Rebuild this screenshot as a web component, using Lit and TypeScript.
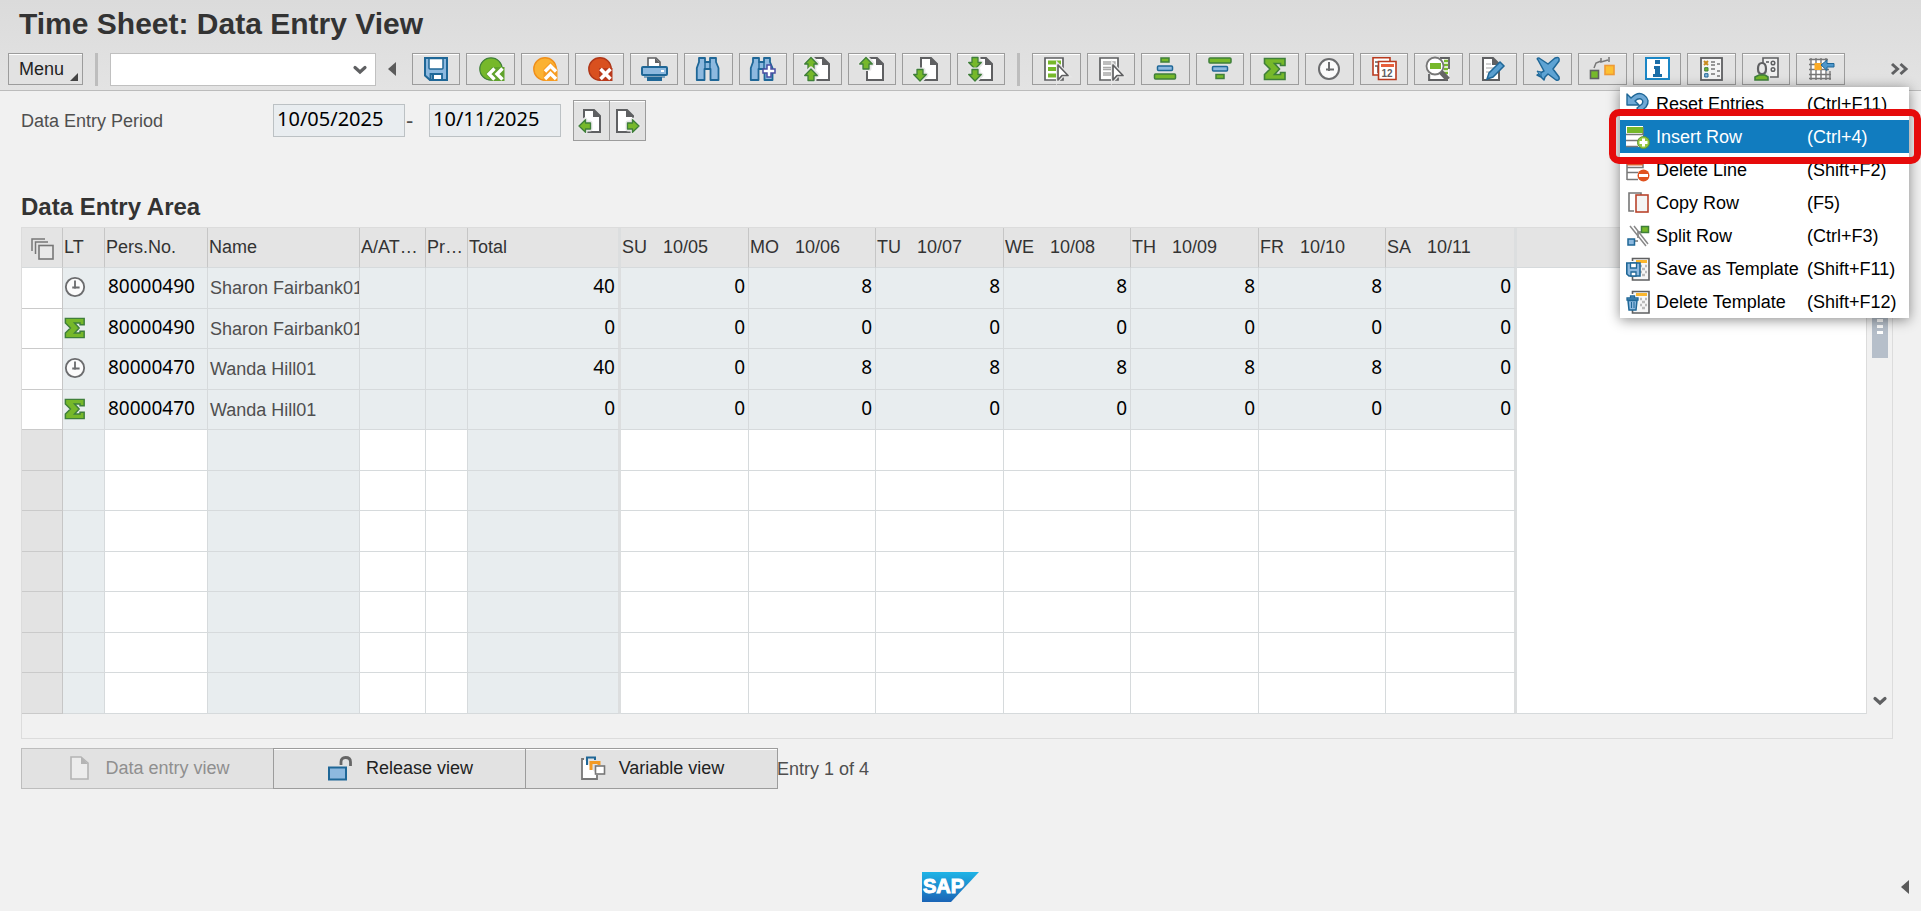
import { LitElement, html, css, svg, nothing } from "lit";
import { customElement, property, state } from "lit/decorators.js";
import { classMap } from "lit/directives/class-map.js";

const G = "#76b82a";
const GD = "#3f7f3a";
const B = "#1f6797";
const BL = "#8db9df";
const K = "#5f6062";

const page = (x: number, y: number) => svg`
  <g transform="translate(${x} ${y})">
    <path d="M1 1H11L17 7V23H1Z" fill="#fff" stroke=${K} stroke-width="2"/>
    <path d="M10 0L18 8H10Z" fill=${K}/>
  </g>`;
const arrow = (x: number, y: number, rot: number) => svg`
  <g transform="translate(${x} ${y}) rotate(${rot})">
    <path d="M0-6L6 0H3V5H-3V0H-6Z" fill="none" stroke="#e6e6e6" stroke-width="5" stroke-linejoin="round"/>
    <path d="M0-6L6.300 0.500H3V5.500H-3V0.500H-6.300Z" fill=${G} stroke=${GD} stroke-width="1.300" stroke-linejoin="round"/>
  </g>`;
const sigma = svg`<path d="M1.500 1.500H22V8.500H17.500V6.500H11.500L16.500 12L11.500 17.500H17.500V15.500H22V22.500H1.500V17.500L7 12L1.500 6.500Z" fill=${G} stroke=${GD} stroke-width="1.600"/>`;
const clock = svg`<circle cx="12" cy="12" r="10" fill="#fbfbfb" stroke="#6b6c6e" stroke-width="2"/>
  <path d="M12 5V14M9 12.500H17" fill="none" stroke="#6b6c6e" stroke-width="2"/>`;
const binoculars = svg`<path d="M3 1H9V5H14V1H20V5L22.500 11V23H14.500V12H8.500V23H0.800V11L3 5Z" fill=${BL} stroke=${B} stroke-width="1.800" stroke-linejoin="round"/>
  <path d="M9 5V12M14 5V12" stroke=${B} stroke-width="1.400"/>`;
const cursor = svg`<path d="M14 8V23L18 18.500H24Z" fill="#fff" stroke="#e6e6e6" stroke-width="4"/>
  <path d="M14 8V23L18 18.500H24Z" fill="#fff" stroke=${K} stroke-width="1.700" stroke-linejoin="round"/>`;
const template = svg`<path d="M6.500 4V1.500H23V23H6.500V20" fill="#f7f7f7" stroke=${K} stroke-width="1.600"/>
  <path d="M10 4.500H21" stroke="#fbb62d" stroke-width="3"/>
  <path d="M14 9H16M19 9H21M16 12H19M14 15H16M19 15H21M16 18H19" stroke="#bbb" stroke-width="2.400"/>`;

const ICONS: Record<string, unknown> = {
  save: svg`<path d="M1 1H23V23H6L1 18.500Z" fill=${BL} stroke=${B} stroke-width="2"/>
    <path d="M5 1.500H19V11Q19 12 18 12H6Q5 12 5 11Z" fill="#fff" stroke=${B} stroke-width="1.500"/>
    <path d="M6.500 23V17H18V23Z" fill="#fff" stroke=${B} stroke-width="1.800"/><path d="M7.500 18H10V22H7.500Z" fill=${B}/>`,
  back: svg`<circle cx="12" cy="12" r="11.200" fill=${G} stroke=${GD} stroke-width="1.200"/>
    <path d="M6.500 17L13 10H25.500V24H13Z" fill="#5fa22c"/>
    <path d="M15.500 11.500L10 17L15.500 22.500M23.500 11.500L18 17L23.500 22.500" fill="none" stroke="#fff" stroke-width="3.400"/>`,
  exit: svg`<circle cx="12" cy="12" r="11.200" fill="#fbb233" stroke="#ef8f1b" stroke-width="1.400"/>
    <path d="M10.500 12L17.500 5L24.500 12V24H10.500Z" fill="#f79c22"/>
    <path d="M12 14.500L17.500 9L23 14.500M12 22L17.500 16.500L23 22" fill="none" stroke="#fff" stroke-width="3.400"/>`,
  cancel: svg`<circle cx="12" cy="12" r="11.200" fill="#d9501f" stroke="#b0381a" stroke-width="1.400"/>
    <path d="M11 11H24.500V24H11Z" fill="#b93a1c"/>
    <path d="M12.500 12L22.500 22M22.500 12L12.500 22" stroke="#fff" stroke-width="3.600"/>`,
  print: svg`<path d="M6 9V1H14L18 5V9" fill="#fff" stroke=${K} stroke-width="1.600"/><path d="M13 1V6H18Z" fill=${K}/>
    <rect x="0" y="10" width="25" height="8" rx="1" fill=${BL} stroke=${B} stroke-width="2"/>
    <path d="M19 13H22V15H19Z" fill="#fff"/><path d="M2 19.500H23V20.500H20V24H5V20.500H2Z" fill=${B}/>`,
  find: binoculars,
  findNext: svg`<g transform="translate(-1 0)">${binoculars}</g>
    <path d="M16 11V8H20V12H24V16H20V20H16V16H12V12H16Z" fill="#fff" stroke="#4a4ea3" stroke-width="1.500"/>`,
  first: svg`${page(7, 0)}${arrow(6, 6.500, 0)}${arrow(6, 18, 0)}`,
  prev: svg`${page(6, 0)}${arrow(6, 6.500, 0)}`,
  next: svg`${page(6, 0)}${arrow(6, 18, 180)}`,
  last: svg`${page(6, 0)}${arrow(6, 6, 180)}${arrow(6, 18, 180)}`,
  selectAll: svg`<path d="M1 1H19V23H1Z" fill="#fff" stroke=${K} stroke-width="1.700"/>
    <path d="M4 5.500H17M4 12H14M4 18.500H13" stroke=${G} stroke-width="4"/>${cursor}`,
  deselect: svg`<path d="M1 1H19V23H1Z" fill="#fff" stroke=${K} stroke-width="1.700"/>
    <path d="M4 5H16V7H4M4 10.500H13V12.500H4M4 16H12V18H4" fill="none" stroke="#a9a9a9" stroke-width="1.300"/>${cursor}`,
  sortAsc: svg`<rect x="8" y="1" width="8" height="4" fill=${G} stroke=${GD} stroke-width="1.500"/>
    <rect x="4.500" y="9" width="15" height="4.500" rx="1" fill=${BL} stroke=${B} stroke-width="1.500"/>
    <rect x="1.500" y="17" width="21" height="5" rx="1" fill=${G} stroke=${GD} stroke-width="1.500"/>`,
  sortDesc: svg`<rect x="1" y="1" width="22" height="5" rx="1" fill=${G} stroke=${GD} stroke-width="1.500"/>
    <rect x="4.500" y="9.500" width="15" height="4.500" rx="1" fill=${BL} stroke=${B} stroke-width="1.500"/>
    <rect x="8" y="17.500" width="8" height="4" fill=${G} stroke=${GD} stroke-width="1.500"/>`,
  sigma,
  clock,
  calendar: svg`<path d="M1 0.800H18V18H1Z" fill="#fff" stroke="#b93a1e" stroke-width="1.600"/><path d="M3 5H8M3 9H6V16" stroke=${K} stroke-width="1.600" fill="none"/>
    <path d="M6.500 4.500H24V22.500H6.500Z" fill="#fff" stroke="#b93a1e" stroke-width="1.600"/><path d="M9 8.500H22" stroke="#e8603c" stroke-width="3"/>
    <text x="9.500" y="20" font-family="Liberation Sans" font-weight="700" font-size="10" fill=${K}>12</text>`,
  analyze: svg`<path d="M5 1H23V23H5Z" fill="#fff"/><path d="M14 1H23V12M3 17V23H22" stroke=${K} stroke-width="1.800" fill="none"/>
    <path d="M18 4H22M18 8H22M18 12H22M18 16H22" stroke=${G} stroke-width="2.400"/>
    <circle cx="9" cy="9" r="8.500" fill="#fff" stroke="#777" stroke-width="1.800"/><path d="M4 6H15V12H4Z" fill=${G}/>
    <path d="M15 15L22 22.500" stroke="#666" stroke-width="5"/>`,
  edit: svg`${page(1, 0)}<path d="M5 7H10M5 11H14M5 15H12" stroke="#c4c4c4" stroke-width="1.600"/>
    <path d="M19 5L23 9L12 20L6 22L8 16Z" fill="#5a9fd0" stroke=${B} stroke-width="1.500"/>`,
  plane: svg`<path d="M2 3Q0 1 3 1L12 7L19 1Q24-1 23 4L17 12L23 20Q24 24 20 23L12 17L9 20L8 23L5 20L1 18L4 16L8 14Z" fill="#5ea3d3" stroke=${B} stroke-width="1.500" stroke-linejoin="round"/>
    <path d="M1 14L5 15V20Z" fill="#5ea3d3" stroke=${B}/>`,
  assign: svg`<path d="M4 11L6 6L11 4M11 1V5L18 3M19 0V5" fill="none" stroke="#777" stroke-width="1.500"/>
    <rect x="0.500" y="13.500" width="8" height="8" fill=${G} stroke=${K} stroke-width="1.600"/>
    <rect x="15" y="8.500" width="9" height="9" fill="#fcc032" stroke="#ef9a35" stroke-width="1.600"/>`,
  info: svg`<rect x="1" y="1" width="23" height="21" fill="#fff" stroke="#1b87c6" stroke-width="2"/>
    <path d="M10 3H15V7H10ZM9 9H15V17H17V20H8V17H10V12H9Z" fill="#1b6ea8"/>`,
  list: svg`<rect x="2" y="1" width="21" height="22" fill="#f4f4f4" stroke=${K} stroke-width="1.800"/>
    <path d="M5 4L9 8M9 4L5 8" stroke="#c98a1c" stroke-width="2"/><path d="M5.700 10.700H9V14H5.700Z" fill=${G} stroke=${GD}/><path d="M5.700 16.700H9V20H5.700Z" fill=${BL} stroke=${B}/>
    <path d="M12 5H16M18 7H21M12 8H16M12 12H16M18 14H21M12 17H16M18 19H21" stroke="#777" stroke-width="1.600"/>`,
  person: svg`<path d="M9 6V1H24V20H16" fill="#f0f0f0" stroke=${K} stroke-width="1.600"/>
    <path d="M12 5H15" stroke=${K} stroke-width="1.600"/>
    <circle cx="19" cy="6" r="1.800" fill="none" stroke=${K} stroke-width="1.500"/><circle cx="19" cy="12.500" r="1.800" fill="none" stroke=${K} stroke-width="1.500"/>
    <path d="M4 12Q4 6 8 6Q12 6 12 12Q12 17 8 17Q4 17 4 12Z" fill="#e9e9e9" stroke=${K} stroke-width="2.200"/>
    <path d="M1 23V20L5 18H11L14 20V23Z" fill=${G} stroke=${GD} stroke-width="1.600"/>`,
  grid: svg`<path d="M2 2H18V22H2Z" fill="#fff"/><path d="M2 1V23M7 1V23M12 1V23M17 1V23M21 14V23M0 2.500H19M0 7.500H14M0 12.500H20M0 17.500H22M0 21.500H22" stroke="#777" stroke-width="1.400"/>
    <rect x="5.500" y="6" width="7" height="7" fill="#fbab26"/><path d="M12 8L18 3V6.500H25V10H18V13.500Z" fill="#4e97cb" stroke=${B} stroke-width="1"/>`,
  pageBack: svg`${page(3, 0)}${arrow(5, 17, -90)}`,
  pageFwd: svg`${page(0, 0)}${arrow(17, 17, 90)}`,
  undo: svg`<path d="M1 2L5 6Q12-1 18 3Q25 8 20 15L13 21L11 16L16 12Q18 9 15 7Q12 6 9 9L13 13H1Z" fill="#6fa9d6" stroke=${B} stroke-width="1.400" stroke-linejoin="round"/>`,
  insert: svg`<path d="M0 1H17V22H0Z" fill="#fff"/><path d="M0 9.500H17V2M0 15.500H12M0 21.500H12" stroke="#777" stroke-width="1.500" fill="none"/><path d="M1 5H17" stroke=${G} stroke-width="6"/>
    <circle cx="17.500" cy="17.500" r="6" fill="#95c840" stroke="#5d9632"/><path d="M17.500 13.500V21.500M13.500 17.500H21.500" stroke="#fff" stroke-width="3"/>`,
  remove: svg`<path d="M1 9.500H17V2M1 14.500H12M1 21.500H12M1 1V22" stroke="#777" stroke-width="1.500" fill="none"/><path d="M1 4.500H17" stroke="#dc5a2c" stroke-width="6"/>
    <circle cx="17.500" cy="17.500" r="6" fill="#e0521f"/><path d="M13 17.500H22" stroke="#fff" stroke-width="3"/>`,
  copy: svg`<path d="M8 20H3V2H15V4" fill="none" stroke="#777" stroke-width="1.600"/><rect x="10" y="4" width="12" height="17" fill="#f4f4f4" stroke="#b9442c" stroke-width="1.600"/>`,
  split: svg`<path d="M12 14V8H16M8 17H12" fill="none" stroke="#777" stroke-width="1.500"/><path d="M4 2L20 22M8 2L22 20" stroke="#888" stroke-width="1.500"/>
    <rect x="15.500" y="2.500" width="7" height="6" fill=${G} stroke=${GD} stroke-width="1.500"/><rect x="2" y="15" width="6.500" height="6" fill=${BL} stroke=${B} stroke-width="1.500"/>`,
  saveTpl: svg`${template}<path d="M0.800 6H14V19H3L0.800 17Z" fill=${BL} stroke=${B} stroke-width="1.600"/>
    <path d="M4.500 6H10.500V11H4.500Z" fill="#fff" stroke=${B} stroke-width="1.300"/><path d="M5 19V15H10V19Z" fill="#fff" stroke=${B} stroke-width="1.300"/>`,
  deleteTpl: svg`${template}<path d="M1 8H12V10H1ZM4.500 6H8.500V8H4.500Z" fill=${BL} stroke=${B} stroke-width="1.300"/>
    <path d="M2 10.500H11L10 20H3Z" fill=${BL} stroke=${B} stroke-width="1.500"/><path d="M5.500 12V18M8 12V18" stroke=${B}/>`,
  doc: svg`<path d="M4 1H14L21 7V23H4Z" fill="#ececec" stroke="#b4b4b4" stroke-width="1.600"/><path d="M14 1V8H21Z" fill="#b4b4b4"/>`,
  unlock: svg`<path d="M13 9V6Q13 1.500 17.500 1.500Q22.500 1.500 22.500 6V10" fill="none" stroke="#666" stroke-width="2.800"/>
    <rect x="1" y="11.500" width="17" height="12" fill=${BL} stroke=${B} stroke-width="2"/>`,
  variable: svg`<path d="M3 3H1V23H16V19" fill="#fff" stroke="#777" stroke-width="1.800"/>
    <path d="M6 9V1.500H14V4" fill="none" stroke=${B} stroke-width="2"/><path d="M10 14V6.500H18V9" fill="none" stroke="#f39a23" stroke-width="3"/>
    <rect x="14.500" y="10" width="9" height="8" fill="#fff" stroke="#777" stroke-width="1.600"/>`,
  stack: svg`<path d="M1 14V2H14M4.500 17V5H17" fill="none" stroke="#777" stroke-width="1.500"/><rect x="8" y="8.500" width="14" height="13.500" fill="#e9e9e9" stroke="#777" stroke-width="1.600"/>`,
  chevron: svg`<path d="M7 9.500L12 14L17 9.500" fill="none" stroke=${K} stroke-width="3.200" stroke-linecap="round"/>`,
  double: svg`<path d="M5 7L10.500 12L5 17M13.500 7L19 12L13.500 17" fill="none" stroke=${K} stroke-width="3"/>`,
};

@customElement("sap-icon")
class SapIcon extends LitElement {
  @property() name = "";
  static styles = css`
    :host { display: block; flex: none; width: 24px; height: 24px; }
    .glyph { display: block; width: 100%; height: 100%; overflow: visible; }
  `;
  render() {
    return html`<svg class="glyph" viewBox="0 0 24 24" aria-hidden="true">${ICONS[this.name]}</svg>`;
  }
}

const STANDARD: [string, string][] = [
  ["save", "Save"], ["back", "Back"], ["exit", "Exit"], ["cancel", "Cancel"], ["print", "Print"], ["find", "Find"],
  ["findNext", "Find next"], ["first", "First page"], ["prev", "Previous page"], ["next", "Next page"], ["last", "Last page"],
];
const APPLICATION: [string, string][] = [
  ["selectAll", "Select all"], ["deselect", "Deselect all"], ["sortAsc", "Sort ascending"], ["sortDesc", "Sort descending"],
  ["sigma", "Sum"], ["clock", "Clock times"], ["calendar", "Target hours"], ["analyze", "Check entries"], ["edit", "Texts"],
  ["plane", "Travel"], ["assign", "Account assignment"], ["info", "Information"], ["list", "Worklist"],
  ["person", "Personnel list"], ["grid", "Layout"],
];
const MENU = [
  { icon: "undo", text: "Reset Entries", key: "(Ctrl+F11)" },
  { icon: "insert", text: "Insert Row", key: "(Ctrl+4)" },
  { icon: "remove", text: "Delete Line", key: "(Shift+F2)" },
  { icon: "copy", text: "Copy Row", key: "(F5)" },
  { icon: "split", text: "Split Row", key: "(Ctrl+F3)" },
  { icon: "saveTpl", text: "Save as Template", key: "(Shift+F11)" },
  { icon: "deleteTpl", text: "Delete Template", key: "(Shift+F12)" },
];
const DAYS = ["SU 10/05", "MO 10/06", "TU 10/07", "WE 10/08", "TH 10/09", "FR 10/10", "SA 10/11"];
const COLUMNS = ["sel", "lt", "no", "name", "att", "pr", "total", "day", "day-b", "day", "day-b", "day", "day-b", "last"];
const ENTRIES = [
  { type: "clock", no: "80000490", name: "Sharon Fairbank01", total: 40, days: [0, 8, 8, 8, 8, 8, 0] },
  { type: "sigma", no: "80000490", name: "Sharon Fairbank01", total: 0, days: [0, 0, 0, 0, 0, 0, 0] },
  { type: "clock", no: "80000470", name: "Wanda Hill01", total: 40, days: [0, 8, 8, 8, 8, 8, 0] },
  { type: "sigma", no: "80000470", name: "Wanda Hill01", total: 0, days: [0, 0, 0, 0, 0, 0, 0] },
];
const EMPTY_ROWS = 7;

@customElement("app-root")
class AppRoot extends LitElement {
  @state() private active = "Insert Row";

  static styles = css`
    * { box-sizing: border-box; }
    :host {
      display: flex; flex-direction: column; min-height: 100vh; background: #f1f1f1; color: #333;
      font: 18px/24px "Liberation Sans", Arial, sans-serif;
    }
    button, input { font: inherit; color: inherit; margin: 0; border-radius: 0; }
    button { padding: 0; border: 1px solid #9c9c9c; background: #e2e2e2; box-shadow: inset 0 1px #fff; display: flex; align-items: center; justify-content: center; }

    .header { position: relative; background: linear-gradient(#dbdbdb, #e3e3e3); border-bottom: 1px solid #bcbcbc; }
    .title { margin: 0; padding: 6px 19px 5px; font-size: 30px; line-height: 36px; font-weight: 700; }
    .toolbar { display: flex; align-items: flex-start; padding: 6px 10px 4px 8px; }
    .menu-button { width: 75px; height: 32px; color: #222; justify-content: flex-start; padding-left: 10px; align-items: center; }
    .corner { align-self: flex-end; margin: 0 0 3px 6px; border-left: 8px solid transparent; border-bottom: 8px solid #444; }
    .separator { width: 3px; height: 33px; margin: 0 12px; background: #bdbdbd; flex: none; }
    .command { display: flex; align-items: center; width: 266px; height: 33px; background: #fff; border: 1px solid #c0c0c0; }
    .command-input { flex: 1; min-width: 0; height: 100%; border: 0; padding: 0 6px; background: none; outline: 0; }
    .bare { border: 0; background: none; box-shadow: none; }
    .drop { margin-right: 3px; }
    .triangle { border: solid transparent; border-width: 7px 8px 7px 0; border-right-color: #5b5b5b; }
    .collapse { height: 32px; margin: 0 16px 0 12px; }
    .tools { display: flex; gap: 6px; min-width: 0; }
    .standard { flex: 0 1 593px; }
    .application { flex: 0 1 813px; }
    .tool { flex: 1; min-width: 0; height: 32px; }
    .more { height: 32px; margin-left: auto; }

    .menu {
      position: absolute; z-index: 2; top: 87px; right: 12px; width: 289px; margin: 0; padding: 0; list-style: none;
      background: #fff; color: #000; box-shadow: 0 2px 12px rgba(0, 0, 0, 0.45);
    }
    .item { position: relative; }
    .entry { width: 100%; height: 33px; padding-left: 6px; text-align: left; display: grid; grid-template-columns: 30px 151px 1fr; justify-items: start; }
    .entry.on { background: #117cbf; color: #fff; }
    .marker { position: absolute; z-index: 1; inset: -11px -12px -11px -11px; border: 7px solid #e60b0b; border-radius: 10px; pointer-events: none; }

    .content { padding: 9px 28px 0 21px; }
    .period { display: flex; align-items: center; color: #4f4f4f; }
    .period-label { width: 252px; }
    .date { width: 132px; height: 33px; padding: 0 3px 4px; border: 1px solid #bcc1c4; background: #e9edf0; color: #000; font: 20px/24px "Noto Sans", sans-serif; }
    .dash { width: 24px; padding-left: 1px; font-size: 22px; }
    .pager { display: flex; margin-left: 12px; }
    .page { width: 37px; height: 41px; }
    .page + .page { margin-left: -1px; }
    .heading { margin: 51px 0 5px; font-size: 24px; line-height: 30px; font-weight: 700; }

    .area { border: 1px solid #dcdcdc; padding-bottom: 24px; display: grid; grid-template-columns: 1fr 25px; }
    .table { width: 100%; table-layout: fixed; border-collapse: separate; border-spacing: 0; background: #fff; border-right: 1px solid #dcdcdc; }
    .c-sel { width: 41px; } .c-lt { width: 42px; } .c-no { width: 103px; } .c-name { width: 152px; }
    .c-att { width: 66px; } .c-pr { width: 42px; } .c-total { width: 153px; }
    .c-day { width: 128px; } .c-day-b { width: 127px; } .c-last { width: 131px; }
    th, td { padding: 0 1px; border-right: 1px solid #d6dadc; border-bottom: 1px solid #d6dadc; overflow: hidden; white-space: nowrap; }
    th { height: 40px; padding-bottom: 2px; background: #e4e4e4; border-right-color: #c6c6c6; font-weight: 400; text-align: left; }
    .code { display: inline-block; margin-right: 16px; }
    tbody tr:nth-child(odd) td { height: 41px; }
    tbody tr:nth-child(even) td { height: 40px; }
    .select { border-right-color: #c6c6c6; border-bottom-color: #cacaca; }
    .shade { background: #e8edef; }
    .grey { background: #e3e3e3; }
    .name { color: #4f4f4f; padding-left: 2px; }
    .no, .num { color: #000; font: 19px/24px "Noto Sans", sans-serif; padding-bottom: 4px; }
    .no { padding-left: 3px; }
    .num { text-align: right; padding-right: 3px; }
    .thick { border-right: 3px solid #dcdedf; }
    .rest { border-right: 0; border-bottom-color: transparent; }
    th.rest, tr:last-child .rest { border-bottom-color: #d6dadc; }
    .stack-cell { padding-left: 9px; }
    .mid { display: inline-block; vertical-align: middle; margin-top: 4px; }
    .small { width: 22px; height: 22px; margin-bottom: 2px; }
    .scroll { display: flex; flex-direction: column; align-items: center; padding: 24px 0 1px; }
    .thumb { width: 16px; height: 106px; background: #b6bfca; display: flex; flex-direction: column; align-items: center; justify-content: flex-end; gap: 3px; padding-bottom: 24px; }
    .grip { width: 6px; height: 3px; background: #fff; }
    .down { margin-top: auto; }

    .views { display: flex; align-items: center; margin-top: 9px; color: #4f4f4f; }
    .view { width: 253px; height: 41px; gap: 14px; padding: 0 0 2px 2px; color: #222; margin-right: -1px; }
    .view:disabled { color: #8f8f8f; border-color: #bdbdbd; box-shadow: none; }
    .footer { display: grid; grid-template-columns: 1fr auto 1fr; align-items: center; margin-top: auto; padding: 0 12px 9px 0; }
    .logo { display: block; width: 57px; height: 30px; margin-right: 8px; }
    .expand { justify-self: end; }
  `;

  private tool = ([icon, label]: [string, string]) => html`
    <button class="tool" aria-label=${label}><sap-icon name=${icon}></sap-icon></button>`;

  private renderHeader() {
    return html`
      <header class="header">
        <h1 class="title">Time Sheet: Data Entry View</h1>
        <div class="toolbar">
          <button class="menu-button">Menu<span class="corner"></span></button>
          <span class="separator"></span>
          <div class="command">
            <input class="command-input" aria-label="Transaction code">
            <button class="bare drop" aria-label="Show history"><sap-icon name="chevron"></sap-icon></button>
          </div>
          <button class="bare collapse" aria-label="Hide command field"><span class="triangle"></span></button>
          <div class="tools standard">${STANDARD.map(this.tool)}</div>
          <span class="separator"></span>
          <div class="tools application">${APPLICATION.map(this.tool)}</div>
          <button class="bare more" aria-label="More"><sap-icon name="double"></sap-icon></button>
        </div>
        <ul class="menu">
          ${MENU.map((m) => html`
            <li class="item">
              <button class=${classMap({ bare: true, entry: true, on: m.text === this.active })}
                @click=${() => (this.active = m.text)}>
                <sap-icon name=${m.icon}></sap-icon><span>${m.text}</span><span>${m.key}</span>
              </button>
              ${m.text === this.active ? html`<div class="marker"></div>` : nothing}
            </li>`)}
        </ul>
      </header>`;
  }

  private renderTable() {
    return html`
      <table class="table">
        <colgroup>${COLUMNS.map((c) => html`<col class="c-${c}">`)}<col></colgroup>
        <thead>
          <tr>
            <th class="stack-cell" aria-label="Select"><sap-icon class="mid" name="stack"></sap-icon></th>
            <th>LT</th><th>Pers.No.</th><th>Name</th><th>A/AT…</th><th>Pr…</th><th class="thick">Total</th>
            ${DAYS.map((d, i) => {
              const [code, date] = d.split(" ");
              return html`<th class=${classMap({ thick: i === 6 })}><span class="code">${code}</span>${date}</th>`;
            })}
            <th class="rest"></th>
          </tr>
        </thead>
        <tbody>
          ${ENTRIES.map((e) => html`
            <tr>
              <td class="select"></td>
              <td class="shade"><sap-icon class="small" name=${e.type}></sap-icon></td>
              <td class="shade no">${e.no}</td>
              <td class="shade name">${e.name}</td>
              <td class="shade"></td><td class="shade"></td>
              <td class="shade num thick">${e.total}</td>
              ${e.days.map((n, i) => html`<td class=${classMap({ shade: true, num: true, thick: i === 6 })}>${n}</td>`)}
              <td class="rest"></td>
            </tr>`)}
          ${Array.from({ length: EMPTY_ROWS }, () => html`
            <tr>
              <td class="select grey"></td><td class="shade"></td><td></td><td class="shade"></td><td></td><td></td>
              <td class="shade thick"></td>
              ${DAYS.map((_, i) => html`<td class=${classMap({ thick: i === 6 })}></td>`)}
              <td class="rest"></td>
            </tr>`)}
        </tbody>
      </table>`;
  }

  render() {
    return html`
      ${this.renderHeader()}
      <main class="content">
        <div class="period">
          <label class="period-label" for="from">Data Entry Period</label>
          <input class="date" id="from" value="10/05/2025" readonly>
          <label class="dash" for="to">-</label>
          <input class="date" id="to" value="10/11/2025" readonly>
          <div class="pager">
            <button class="page" aria-label="Previous period"><sap-icon name="pageBack"></sap-icon></button>
            <button class="page" aria-label="Next period"><sap-icon name="pageFwd"></sap-icon></button>
          </div>
        </div>
        <h2 class="heading">Data Entry Area</h2>
        <section class="area">
          ${this.renderTable()}
          <div class="scroll">
            <div class="thumb"><span class="grip"></span><span class="grip"></span><span class="grip"></span></div>
            <button class="bare down" aria-label="Scroll down"><sap-icon name="chevron"></sap-icon></button>
          </div>
        </section>
        <div class="views">
          <button class="view" disabled><sap-icon name="doc"></sap-icon>Data entry view</button>
          <button class="view"><sap-icon name="unlock"></sap-icon>Release view</button>
          <button class="view"><sap-icon name="variable"></sap-icon>Variable view</button>
          <span class="status">Entry 1 of 4</span>
        </div>
      </main>
      <footer class="footer">
        <span></span>
        <svg class="logo" viewBox="0 0 57 30" role="img" aria-label="SAP">
          <defs><linearGradient id="sky" x1="0" y1="0" x2="0" y2="1"><stop offset="0" stop-color="#1fb4e6"/><stop offset="1" stop-color="#1a64b6"/></linearGradient></defs>
          <path d="M0 0H57L29 30H0Z" fill="url(#sky)"/>
          <text x="1" y="21" font-family="Liberation Sans" font-weight="700" font-size="20" fill="#fff" stroke="#fff" stroke-width="1">SAP</text>
        </svg>
        <button class="bare expand" aria-label="Show status bar"><span class="triangle"></span></button>
      </footer>`;
  }
}
